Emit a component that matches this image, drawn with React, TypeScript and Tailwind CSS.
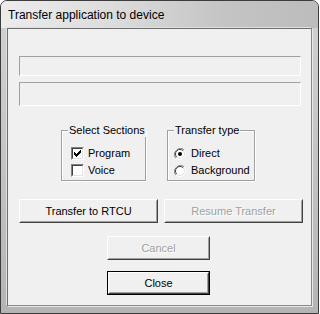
const font = { fontFamily: '"Liberation Sans", Arial, sans-serif' };

// classic 7x7 check mark, one rect per run of pixels
const checkRuns = [
  [6, 0, 1],
  [5, 1, 2],
  [0, 2, 1],
  [4, 2, 3],
  [0, 3, 2],
  [3, 3, 3],
  [0, 4, 5],
  [1, 5, 3],
  [2, 6, 1],
];

const Edit = ({ h }: { h: string }) => (
  <div
    className={`ml-[11px] w-[282px] ${h} border-t border-l border-t-[#a0a0a0] border-l-[#a0a0a0] border-b border-r border-b-white border-r-white bg-[#f0f0f0]`}
  />
);

const Check = ({ checked, label }: { checked?: boolean; label: string }) => (
  <div className="flex items-center h-[17px]">
    <div className="w-[13px] h-[13px] border border-t-[#808080] border-l-[#808080] border-b-white border-r-white">
      <div className="w-full h-full border border-t-[#404040] border-l-[#404040] border-b-[#e3e3e3] border-r-[#e3e3e3] bg-white flex items-center justify-center">
        {checked && (
          <svg width="7" height="7" viewBox="0 0 7 7" shapeRendering="crispEdges">
            {checkRuns.map(([x, y, w], i) => (
              <rect key={i} x={x} y={y} width={w} height={1} fill="#000" />
            ))}
          </svg>
        )}
      </div>
    </div>
    <span className="ml-[4px] text-[11px] text-black">{label}</span>
  </div>
);

const Radio = ({ checked, label }: { checked?: boolean; label: string }) => (
  <div className="flex items-center h-[17px]">
    <svg width="12" height="12" viewBox="0 0 12 12">
      <path d="M10.2 1.8A6 6 0 0 0 1.8 10.2" stroke="#808080" strokeWidth="1" fill="none" />
      <path d="M1.8 10.2A6 6 0 0 0 10.2 1.8" stroke="#ffffff" strokeWidth="1" fill="none" />
      <circle cx="6" cy="6" r="4.5" fill="#fff" />
      <path d="M9.2 2.8A4.5 4.5 0 0 0 2.8 9.2" stroke="#404040" strokeWidth="1" fill="none" />
      <path d="M2.8 9.2A4.5 4.5 0 0 0 9.2 2.8" stroke="#e3e3e3" strokeWidth="1" fill="none" />
      {checked && <circle cx="6" cy="6" r="2" fill="#000" />}
    </svg>
    <span className="ml-[5px] text-[11px] text-black">{label}</span>
  </div>
);

const Group = ({ title, w, children }: { title: string; w: string; children: React.ReactNode }) => (
  <div className={`relative ${w} h-[51px] border border-[#a0a0a0] shadow-[inset_1px_1px_0_#fff,1px_1px_0_#fff]`}>
    <span className="absolute -top-[8px] left-[6px] px-[1px] bg-[#f0f0f0] text-[11px] leading-[14px] text-black whitespace-nowrap">
      {title}
    </span>
    {children}
  </div>
);

const Btn = ({
  label,
  w,
  disabled,
  primary,
}: {
  label: string;
  w: string;
  disabled?: boolean;
  primary?: boolean;
}) => (
  <div className={`${w} h-[24px] ${primary ? "border border-black" : ""}`}>
    <div className="w-full h-full border border-t-white border-l-white border-b-[#404040] border-r-[#404040]">
      <div className="w-full h-full border border-t-[#f0f0f0] border-l-[#f0f0f0] border-b-[#a0a0a0] border-r-[#a0a0a0] bg-[#f0f0f0] flex items-center justify-center">
        <span
          className={`text-[11px] leading-none ${
            disabled ? "text-[#a0a0a0] [text-shadow:1px_1px_0_#fff]" : "text-black"
          }`}
        >
          {label}
        </span>
      </div>
    </div>
  </div>
);

export default function App() {
  return (
    <div className="w-[319px] h-[314px] bg-white">
      <div className="w-[319px] h-[314px] rounded-t-[7px] border border-[#3c3c3c] bg-[linear-gradient(180deg,#d2d2d2_0%,#c4c4c4_50%,#b4b4b4_100%)] flex flex-col">
        {/* title bar */}
        <div className="h-[27px] shrink-0 rounded-t-[6px] bg-[linear-gradient(90deg,#ececec_0%,#dcdcdc_35%,#c4c4c4_70%,#bcbcbc_100%)] flex items-center pl-[7px]" style={font}>
          <span className="text-[12px] text-black">Transfer application to device</span>
        </div>
        {/* client area */}
        <div className="mx-[6px] h-[278px] border border-t-[#6e6e6e] border-l-[#6e6e6e] border-b-[#8a8a8a] border-r-[#8a8a8a] shadow-[1px_1px_0_#e8e8e8,-1px_-1px_0_#e0e0e0] bg-[#f0f0f0] flex flex-col" style={font}>
          <div className="h-[27px] shrink-0" />
          <Edit h="h-[20px]" />
          <div className="h-[6px] shrink-0" />
          <Edit h="h-[24px]" />
          <div className="h-[24px] shrink-0" />
          <div className="flex ml-[53px] gap-[21px]">
            <Group title="Select Sections" w="w-[85px]">
              <div className="ml-[9px] mt-[14px] flex flex-col">
                <Check checked label="Program" />
                <Check label="Voice" />
              </div>
            </Group>
            <Group title="Transfer type" w="w-[88px]">
              <div className="ml-[6px] mt-[14px] flex flex-col">
                <Radio checked label="Direct" />
                <Radio label="Background" />
              </div>
            </Group>
          </div>
          <div className="h-[18px] shrink-0" />
          <div className="flex ml-[11px] gap-[6px]">
            <Btn label="Transfer to RTCU" w="w-[139px]" />
            <Btn label="Resume Transfer" w="w-[139px]" disabled />
          </div>
          <div className="h-[13px] shrink-0" />
          <div className="ml-[99px]">
            <Btn label="Cancel" w="w-[103px]" disabled />
          </div>
          <div className="h-[11px] shrink-0" />
          <div className="ml-[99px]">
            <Btn label="Close" w="w-[103px]" primary />
          </div>
        </div>
      </div>
    </div>
  );
}
